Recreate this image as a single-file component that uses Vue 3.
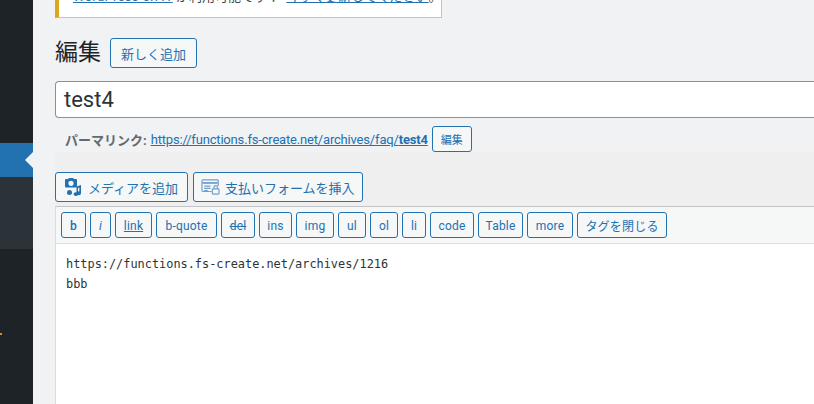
<script setup>
const tags = [
  { t: 'b', c: 'bold', w: 25 }, { t: 'i', c: 'ital', w: 21 }, { t: 'link', c: 'und', w: 37 },
  { t: 'b-quote', w: 61 }, { t: 'del', c: 'strike', w: 34 }, { t: 'ins', w: 33 }, { t: 'img', w: 38 },
  { t: 'ul', w: 28 }, { t: 'ol', w: 28 }, { t: 'li', w: 24 }, { t: 'code', w: 44 }, { t: 'Table', w: 45 },
  { t: 'more', w: 46 }, { t: 'タグを閉じる', w: 90 }
]
</script>

<template>
  <div class="page">
    <aside class="side">
      <div class="menu-top"></div>
      <div class="menu-active"><span class="arrow"></span></div>
      <div class="submenu"></div>
      <div class="menu-rest"><span class="dot"></span></div>
    </aside>
    <main class="main">
      <div class="notice">
        <p class="notice-text"><a class="wp" href="#">WordPress 6.7.1</a> が利用可能です！&nbsp;&nbsp;<a href="#">今すぐ更新してください</a>。</p>
      </div>
      <div class="heading">
        <h1>編集</h1>
        <button class="btn add">新しく追加</button>
      </div>
      <div class="title">test4</div>
      <div class="perma">
        <strong>パーマリンク:</strong>
        <a class="url" href="#">https://functions.fs-create.net/archives/faq/<b>test4</b></a>
        <button class="btn small">編集</button>
      </div>
      <div class="editor">
        <div class="media">
          <button class="btn mbtn first">
            <svg class="i-media" viewBox="0 0 18 18" width="18" height="18">
              <path fill="#2271b1" fill-rule="evenodd" d="M2 1h2l1-1h4l1 1h2a1 1 0 0 1 1 1v6.500a1 1 0 0 1-1 1H2a1 1 0 0 1-1-1V2a1 1 0 0 1 1-1zm5 1.700a2.600 2.600 0 1 0 0 5.200a2.600 2.600 0 0 0 0-5.200z"/>
              <path fill="#2271b1" d="M12.500 8.500l4.500-1.500v8.200a2.200 1.900 0 1 1-1.700-1.800V9.600l-1.300.5v6.100a2.200 1.900 0 1 1-1.500-1.900z"/>
              <circle fill="#2271b1" cx="5.500" cy="14.500" r="2.500"/>
            </svg>
            <span>メディアを追加</span>
          </button>
          <button class="btn mbtn second">
            <svg viewBox="0 0 22 20" width="21" height="18" fill="none" stroke="#6f9fd0" stroke-width="1.300">
              <path d="M12 15H2.500a1 1 0 0 1-1-1V3a1 1 0 0 1 1-1h16a1 1 0 0 1 1 1v6"/>
              <path stroke-width="2" d="M2 5.500h17"/>
              <path d="M4 9h7M4 11.500h7M4 14h4"/>
              <rect x="13" y="12" width="7.500" height="6" rx="1"/>
              <path d="M14.800 12v-1.500a2 2 0 0 1 4 0V12"/>
            </svg>
            <span>支払いフォームを挿入</span>
          </button>
        </div>
        <div class="box">
          <div class="toolbar">
            <button
              v-for="tag in tags"
              :key="tag.t"
              class="btn tag"
              :class="tag.c"
              :style="{ width: tag.w + 'px' }"
            >{{ tag.t }}</button>
          </div>
          <div class="content">
            <div>https://functions.fs-create.net/archives/1216</div>
            <div>bbb</div>
          </div>
        </div>
      </div>
    </main>
  </div>
</template>

<style>
html, body { margin: 0; height: 100%; overflow: hidden; background: #f1f2f4; }
</style>

<style scoped>
.page {
  display: flex;
  width: 814px;
  height: 404px;
  overflow: hidden;
  background: #f1f2f4;
  color: #3c434a;
  font-family: Roboto, "Noto Sans CJK JP", sans-serif;
  font-size: 13px;
}
.side { width: 33px; flex: none; display: flex; flex-direction: column; background: #1d2327; }
.menu-top { height: 143px; }
.menu-active { height: 34px; background: #2271b1; position: relative; }
.arrow {
  position: absolute; right: 0; top: 9px; width: 0; height: 0;
  border: 8px solid transparent; border-right-color: #f1f2f4; border-left-width: 0;
}
.submenu { height: 72px; background: #2c3338; }
.menu-rest { flex: 1; position: relative; }
.dot { position: absolute; left: 0; top: 84px; width: 2px; height: 2px; background: #e08a1e; }
.main { flex: 1; min-width: 0; padding-left: 22px; display: flex; flex-direction: column; }
.notice {
  box-sizing: border-box;
  width: 387px; height: 18px; flex: none;
  background: #fff;
  border-right: 1px solid #c3c4c7;
  border-bottom: 1px solid #c3c4c7;
  border-left: 4px solid #dba617;
  padding-left: 14px;
  overflow: hidden;
}
.notice-text { margin: -11px 0 0; line-height: 16px; white-space: nowrap; }
.notice a, .perma a { color: #2271b1; text-decoration: underline; }
.wp { letter-spacing: 0.3px; }
.heading { display: flex; align-items: center; margin-top: 20px; height: 30px; flex: none; }
h1 { margin: 0; font-size: 23px; font-weight: 400; line-height: 30px; color: #1d2327; }
.btn {
  box-sizing: border-box;
  font-family: inherit;
  background: #f6f7f7;
  color: #2271b1;
  border: 1px solid #2271b1;
  border-radius: 3px;
  padding: 0;
  display: inline-flex;
  align-items: center;
  justify-content: center;
  white-space: nowrap;
}
.add { width: 87px; height: 30px; margin-left: 9px; font-size: 13px; }
.title {
  box-sizing: border-box;
  margin-top: 13px;
  height: 37px;
  background: #fff;
  border: 1px solid #8c8f94;
  border-right: 0;
  border-radius: 4px 0 0 4px;
  padding-left: 8px;
  font-size: 22px;
  line-height: 35px;
  color: #2c3338;
  flex: none;
}
.perma {
  display: flex; align-items: center; gap: 4px;
  height: 26px; margin-top: 8px; padding-left: 10px; flex: none;
  font-size: 13px; color: #646970;
}
.perma strong { font-weight: 700; }
.perma b { font-weight: 700; }
.url { letter-spacing: -0.18px; }
.small { width: 40px; height: 26px; font-size: 11px; }
.editor { background: #efefef; padding-top: 20px; flex: 1; min-height: 0; }
.media { display: flex; gap: 5px; height: 30px; }
.mbtn { height: 30px; font-size: 13px; justify-content: flex-start; }
.first { width: 133px; padding-left: 8px; gap: 6px; }
.second { width: 170px; padding-left: 6px; gap: 4px; }
.box { margin-top: 4px; background: #fff; border-top: 1px solid #c3c4c7; border-left: 1px solid #dcdcde; height: 300px; }
.toolbar {
  display: flex; gap: 4px; padding: 5px 0 5px 5px; height: 26px; box-sizing: content-box;
  background: #f6f7f7; border-bottom: 1px solid #dcdcde;
}
.tag { height: 26px; padding-top: 1px; font-size: 12px; letter-spacing: 0.2px; flex: none; }
.bold { font-weight: 500; }
.ital { font-style: italic; }
.und { text-decoration: underline; }
.strike { text-decoration: line-through; }
.content {
  padding: 11px 10px;
  font-family: "DejaVu Sans Mono", monospace;
  font-size: 11.9px;
  line-height: 19.5px;
  color: #2c3338;
}
</style>
